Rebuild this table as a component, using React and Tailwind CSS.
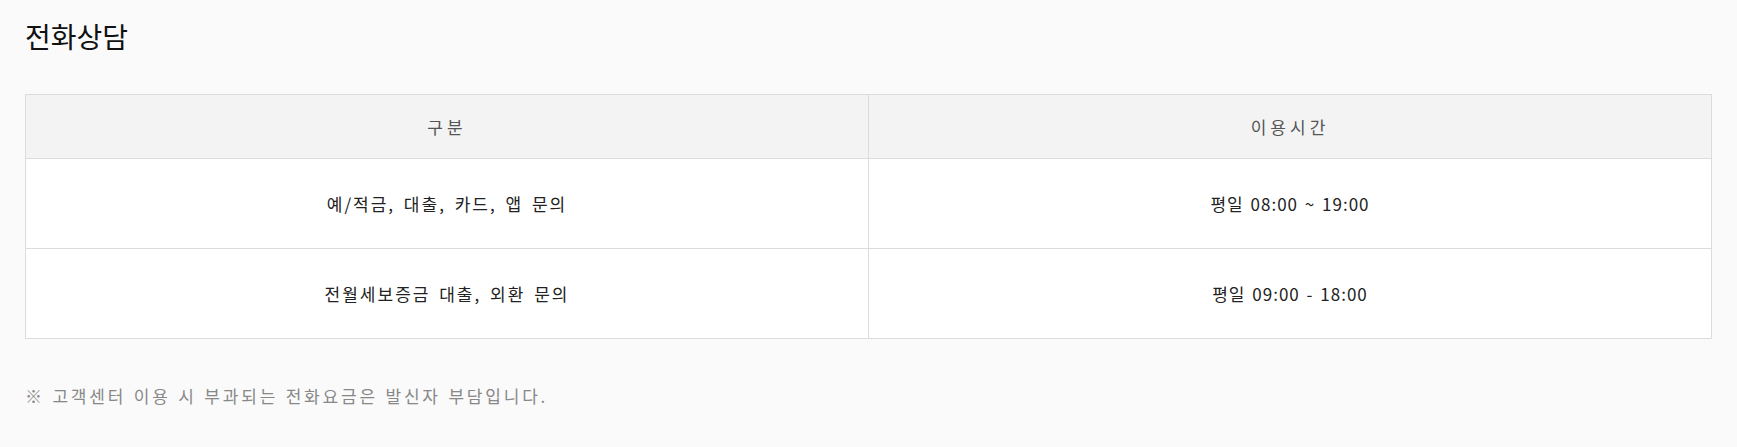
import React from 'react';

const rows = [
  { type: '예/적금, 대출, 카드, 앱 문의', hours: '평일 08:00 ~ 19:00' },
  { type: '전월세보증금 대출, 외환 문의', hours: '평일 09:00 - 18:00' },
];

const App = () => {
  return (
    <div
      className="min-h-[447px] w-full bg-[#fafafa] px-[25px] pt-[17px]"
      style={{ fontFamily: '"Noto Sans CJK KR", "Noto Sans", sans-serif' }}
    >
      {/* 제목 */}
      <h2 className="text-[28px] leading-[38px] font-normal text-[#111]">전화상담</h2>

      {/* 상담 시간표 */}
      <table className="mt-[39px] w-full border-collapse border border-[#dcdcdc] bg-white">
        <thead>
          <tr className="bg-[#f3f3f3]">
            <th className="h-[64px] w-1/2 border border-[#dcdcdc] text-[17px] font-normal tracking-[4px] text-[#555]">
              구분
            </th>
            <th className="h-[64px] w-1/2 border border-[#dcdcdc] text-[17px] font-normal tracking-[4px] text-[#555]">
              이용시간
            </th>
          </tr>
        </thead>
        <tbody>
          {rows.map((row) => (
            <tr key={row.type}>
              <td className="h-[90px] border border-[#dcdcdc] text-center text-[17px] tracking-[2px] [word-spacing:3px] text-[#222]">
                {row.type}
              </td>
              <td className="h-[90px] border border-[#dcdcdc] text-center text-[17px] tracking-[1px] [word-spacing:2px] text-[#222]">
                {row.hours}
              </td>
            </tr>
          ))}
        </tbody>
      </table>

      {/* 안내 문구 */}
      <p className="mt-[45px] text-[17px] leading-[24px] tracking-[2.8px] [word-spacing:1px] text-[#888]">
        ※ 고객센터 이용 시 부과되는 전화요금은 발신자 부담입니다.
      </p>
    </div>
  );
};

export default App;
